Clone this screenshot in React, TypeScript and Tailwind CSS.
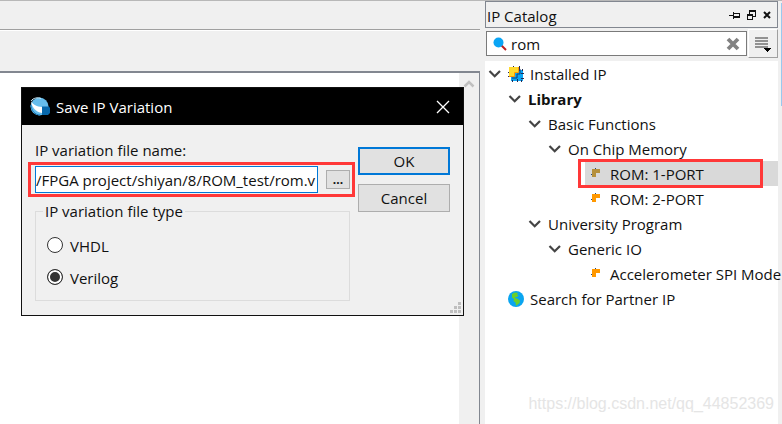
import { useState } from 'react';

type TreeItem = {
  label: string;
  depth: number;
  kind: 'root' | 'group' | 'core' | 'partner';
  bold?: boolean;
};

const treeItems: TreeItem[] = [
  { label: 'Installed IP', depth: 0, kind: 'root' },
  { label: 'Library', depth: 1, kind: 'group', bold: true },
  { label: 'Basic Functions', depth: 2, kind: 'group' },
  { label: 'On Chip Memory', depth: 3, kind: 'group' },
  { label: 'ROM: 1-PORT', depth: 5, kind: 'core' },
  { label: 'ROM: 2-PORT', depth: 5, kind: 'core' },
  { label: 'University Program', depth: 2, kind: 'group' },
  { label: 'Generic IO', depth: 3, kind: 'group' },
  { label: 'Accelerometer SPI Mode', depth: 5, kind: 'core' },
  { label: 'Search for Partner IP', depth: 1, kind: 'partner' },
];

const indents = ['pl-0', 'pl-5', 'pl-10', 'pl-15', 'pl-20', 'pl-25'];

function Chevron() {
  return (
    <svg className="w-5 h-5 shrink-0" viewBox="0 0 20 20" fill="none" stroke="#444" strokeWidth="2.2">
      <path d="M4.5 7l5.200 5.200L15 7" />
    </svg>
  );
}

function InstalledIcon() {
  return (
    <svg className="w-4 h-4 shrink-0" viewBox="0 0 16 16">
      <path d="M3 4h12v11H3z" fill="#0aa5f5" />
      <path d="M5.500 0v2M11.500 0v5M14.500 3v2M0 6.500h2M0 10.500h3M4.500 14v2M9.500 13v3M13.500 14v2M13 7.500h3M13 12.500h3" stroke="#222b55" fill="none" />
      <path d="M1 1h9v5H7v4H1z" fill="#ffd92e" />
      <path d="M10.500 1v5.500h-4v4H1" stroke="#ff9800" fill="none" />
      <path d="M12 3v5H9v4H4" stroke="#1b3d70" fill="none" />
    </svg>
  );
}

function CoreIcon({ dimmed }: { dimmed: boolean }) {
  return (
    <svg className="w-4 h-4 shrink-0" viewBox="0 0 16 16" shapeRendering="crispEdges">
      <path d="M7 2h1v1H7zM3 8h1v1H3z" fill="#1f4a80" />
      <path d="M4 3h8v4H8v4H4z" fill={dimmed ? '#b5903c' : '#ff9800'} />
    </svg>
  );
}

function GlobeIcon() {
  return (
    <svg className="w-4 h-4 shrink-0" viewBox="0 0 16 16">
      <circle cx="8" cy="8" r="8" fill="#0aa5f0" />
      <path d="M4 3l3-1.500 3 .5-1 1.500 1.500 1-1.500 1.500H7.500l-.5 1 2 .5 3 2-.5 2.500-2.500 2-1 1-.5-3.500L5.500 10 6 8 4 6.500z" fill="#6bd02a" />
    </svg>
  );
}

function AppIcon() {
  return (
    <svg className="w-5 h-5 shrink-0" viewBox="0 0 20 20">
      <circle cx="9.500" cy="9.500" r="9" fill="#66bdec" />
      <path d="M1 4c2 4 6 5.500 11 6v6C6 15 2 11 1 4z" fill="#fff" />
      <path d="M1 4c2-3 7-4 10-2.500" fill="none" stroke="#cfeaf8" />
      <path d="M1 8c0 5 4 10 9 10" fill="none" stroke="#1b7dbd" />
      <path d="M12 9.500h7l1 1.500v5l-2 2h-6z" fill="#0868ab" />
    </svg>
  );
}

function SaveDialog() {
  const [fileName, setFileName] = useState('/FPGA project/shiyan/8/ROM_test/rom.v');
  const [fileType, setFileType] = useState('Verilog');

  return (
    <div role="dialog" aria-labelledby="dialog-title" className="absolute left-[21px] top-[86px] w-[443px] border border-[#111] bg-[#f0f0f0]">
      <div className="flex h-[37px] items-center bg-black px-2 text-white">
        <AppIcon />
        <h2 id="dialog-title" className="ml-1.5 flex-1">Save IP Variation</h2>
        <button aria-label="Close" className="p-1">
          <svg className="w-4 h-4" viewBox="0 0 16 16" fill="none" stroke="#fff" strokeWidth="1.3">
            <path d="M2 2l12 12M14 2L2 14" />
          </svg>
        </button>
      </div>

      <div className="flex gap-2 p-[13px] pt-3.5 pb-3.5">
        <div className="w-[315px]">
          <label htmlFor="file-name" className="block h-[27px] pt-px leading-5">IP variation file name:</label>
          <div className="relative flex items-center gap-2">
            <input
              id="file-name"
              className="h-[27px] w-[283px] border border-[#0078d7] bg-white outline-none"
              value={fileName}
              onChange={(e) => setFileName(e.target.value)}
            />
            <button aria-label="Browse" className="h-[19px] w-6 border border-[#adadad] bg-[#e1e1e1] text-xs leading-4 font-bold">...</button>
            <div className="pointer-events-none absolute -left-[7px] -right-[5px] -inset-y-1 border-3 border-[#ff3838]"></div>
          </div>

          <fieldset className="mt-2 h-[100px] border border-[#dcdcdc] px-[11px]">
            <legend className="-ml-1 px-0.5 leading-5">IP variation file type</legend>
            <div className="flex flex-col gap-3 pt-3.5">
              {['VHDL', 'Verilog'].map((type) => (
                <label key={type} className="flex h-5 items-center gap-[7px]">
                  <input
                    type="radio"
                    name="file-type"
                    checked={fileType === type}
                    onChange={() => setFileType(type)}
                    className="h-4 w-4 appearance-none rounded-full border border-[#333] bg-white checked:bg-[#333] checked:shadow-[inset_0_0_0_2px_#fff]"
                  />
                  <span className="pt-0.5">{type}</span>
                </label>
              ))}
            </div>
          </fieldset>
        </div>

        <div className="flex flex-1 flex-col gap-[9px] pt-2">
          <button className="h-7 border-2 border-[#0078d7] bg-[#e1e1e1]">OK</button>
          <button className="h-7 border border-[#adadad] bg-[#e1e1e1]">Cancel</button>
        </div>
      </div>

      <svg className="absolute bottom-0.5 right-0.5 h-[11px] w-[11px]" viewBox="0 0 11 11" fill="#bfbfbf" shapeRendering="crispEdges">
        <path d="M8 0h3v3H8zM4 4h3v3H4zM8 4h3v3H8zM0 8h3v3H0zM4 8h3v3H4zM8 8h3v3H8z" />
      </svg>
    </div>
  );
}

function CatalogPanel() {
  const [query, setQuery] = useState('rom');
  const [selected, setSelected] = useState('ROM: 1-PORT');

  return (
    <aside className="flex w-[293px] shrink-0 flex-col">
      <div className="flex h-[27px] items-center border border-[#828790] pl-px pr-1">
        <h2 className="flex-1 pt-0.5">IP Catalog</h2>
        <div className="flex items-center gap-1">
          <button aria-label="Pin">
            <svg className="w-3 h-3" viewBox="0 0 12 12" fill="none" stroke="#111" shapeRendering="crispEdges">
              <path d="M0 6.500h4M4.500 3v7M4.500 4.500h6v4h-6M5 7.500h5" />
            </svg>
          </button>
          <button aria-label="Float">
            <svg className="w-3 h-3" viewBox="0 0 12 12" fill="none" stroke="#111" shapeRendering="crispEdges">
              <path d="M4.500 5V2.500h6v5H8M4 1.500h7M2.500 6.500h5v4h-5zM2 5.500h6" />
            </svg>
          </button>
          <button aria-label="Close panel">
            <svg className="w-3 h-3" viewBox="0 0 12 12" fill="none" stroke="#111" strokeWidth="2">
              <path d="M3 3l6 6M9 3L3 9" />
            </svg>
          </button>
        </div>
      </div>

      <div className="flex items-center gap-px py-px pl-px">
        <div className="flex h-[25px] flex-1 items-center border border-[#7a7a7a] bg-white px-1.5">
          <svg className="h-[14px] w-[14px] shrink-0" viewBox="0 0 14 14">
            <path d="M8.500 8.500l4.500 4.500" stroke="#bd1e1e" strokeWidth="2" />
            <circle cx="5.500" cy="5.500" r="5" fill="#0aa5f5" />
          </svg>
          <input
            aria-label="Search IP"
            className="ml-1 w-0 flex-1 bg-transparent outline-none"
            value={query}
            onChange={(e) => setQuery(e.target.value)}
          />
          <button aria-label="Clear search" onClick={() => setQuery('')}>
            <svg className="h-[14px] w-[14px]" viewBox="0 0 14 14" fill="none" stroke="#828282" strokeWidth="3.800">
              <path d="M2 2l10 10M12 2L2 12" />
            </svg>
          </button>
        </div>
        <button aria-label="Options" className="flex h-[29px] w-[30px] items-center justify-center border border-white border-r-[#a0a0a0] border-b-[#a0a0a0]">
          <svg className="w-4 h-4" viewBox="0 0 16 16" shapeRendering="crispEdges">
            <path d="M0 1h13v2H0zM0 4h13v2H0zM0 7h13v2H0zM0 10h13v2H0z" fill="#929292" />
            <path d="M8 12h8l-4 4z" fill="#000" />
          </svg>
        </button>
      </div>

      <ul role="tree" className="mt-[2px] flex-1 bg-white">
        {treeItems.map((item) => (
          <li key={item.label} role="treeitem" aria-selected={item.label === selected} className={indents[item.depth]}>
            <div
              onClick={() => setSelected(item.label)}
              className={`relative flex h-[25px] items-center whitespace-nowrap ${item.label === selected ? 'bg-[#d9d9d9]' : ''}`}
            >
              {(item.kind === 'root' || item.kind === 'group') && <Chevron />}
              <span className="flex items-center gap-1.5 pl-[3px]">
                {item.kind === 'root' && <InstalledIcon />}
                {item.kind === 'core' && <CoreIcon dimmed={item.label === selected} />}
                {item.kind === 'partner' && <GlobeIcon />}
                <span className={item.bold ? 'font-bold' : ''}>{item.label}</span>
              </span>
              {item.label === selected && (
                <span className="pointer-events-none absolute -left-[7px] -top-0.5 -bottom-0.5 right-[15px] border-3 border-[#ff3838]"></span>
              )}
            </div>
          </li>
        ))}
      </ul>
    </aside>
  );
}

export default function App() {
  return (
    <div className="relative flex min-h-screen overflow-hidden border-t border-[#b8b8b8] bg-[#f0f0f0] font-['Open_Sans','Noto_Sans',sans-serif] text-[15px] leading-5 text-[#111]">
      <main className="flex flex-1 flex-col">
        <div className="h-[29px] border-b border-[#a0a0a0]"></div>
        <div className="h-[41px] border-t border-white"></div>
        <div className="flex flex-1 border-t-2 border-r border-[#828790] bg-white">
          <div className="flex-1"></div>
          <div className="w-5 bg-[#f0f0f0] pt-1.5">
            <svg className="w-5 h-3" viewBox="0 0 20 12" fill="none" stroke="#c0c0c0" strokeWidth="2.500">
              <path d="M5.500 7.500L10 3l4.500 4.500" />
            </svg>
          </div>
        </div>
      </main>
      <div className="w-[5px] shrink-0"></div>
      <CatalogPanel />
      <div className="w-1 shrink-0">
        <div className="ml-[3px] mt-0.5 h-[103px] bg-[#99c9ef]"></div>
      </div>

      <SaveDialog />
      <div className="pointer-events-none absolute right-2 bottom-2 font-['Liberation_Sans',Arial,sans-serif] text-base text-[#e5e5e5]">
        https://blog.csdn.net/qq_44852369
      </div>
    </div>
  );
}
